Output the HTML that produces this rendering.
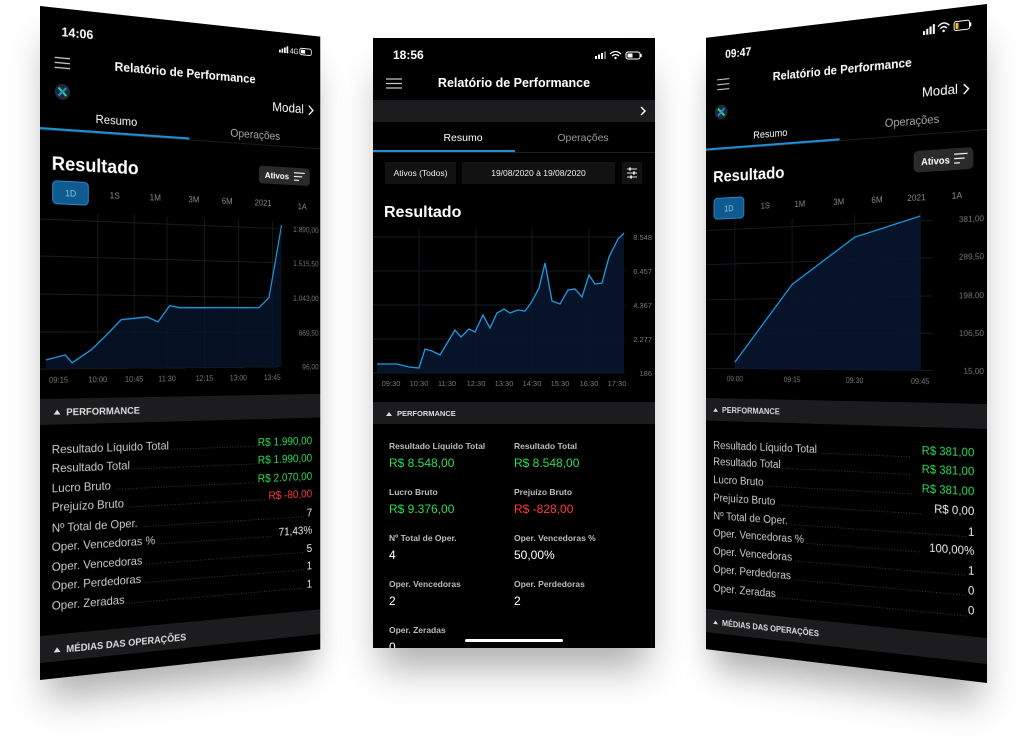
<!DOCTYPE html>
<html><head><meta charset="utf-8"><style>
html,body{margin:0;padding:0;background:#fff;width:1027px;height:754px;overflow:hidden;font-family:"Liberation Sans",sans-serif}
.wrap{position:absolute;left:0;top:0;width:1027px;height:754px}
.ph{position:absolute;background:#000;box-shadow:0 28px 36px -8px rgba(0,0,0,.32)}
svg text{font-family:"Liberation Sans",sans-serif}
</style></head><body>

<!-- LEFT PHONE -->
<div class="wrap" style="perspective:600px;perspective-origin:40px 343px">
<div class="ph" style="left:40px;top:6px;width:314px;height:674px;transform-origin:0 50%;transform:rotateY(11deg)">
<svg width="314" height="674" viewBox="0 0 314 674">
<rect width="314" height="674" fill="#000"/>
<text x="22" y="28" fill="#fff" font-size="13" font-weight="bold">14:06</text>
<g fill="#fff"><rect x="264" y="19" width="2" height="3"/><rect x="267" y="17.5" width="2" height="4.5"/><rect x="270" y="16" width="2" height="6"/><rect x="273" y="14.5" width="2" height="7.5"/></g>
<text x="277" y="22" fill="#fff" font-size="8">4G</text>
<rect x="289" y="15" width="14" height="7" rx="2" fill="none" stroke="#fff" stroke-width="1"/><rect x="290.5" y="16.5" width="5" height="4" fill="#fff"/>
<g stroke="#ccc" stroke-width="1.3"><line x1="15" y1="50" x2="31" y2="50"/><line x1="15" y1="55" x2="31" y2="55"/><line x1="15" y1="60" x2="31" y2="60"/></g>
<text x="157" y="58" fill="#fff" font-size="13" font-weight="bold" text-anchor="middle">Relatório de Performance</text>
<circle cx="23" cy="84" r="8" fill="#1f2a38"/><path d="M19 80 L27 88" stroke="#2bd38a" stroke-width="2.2"/><path d="M27 80 L19 88" stroke="#2a8ad0" stroke-width="2.2"/>
<text x="294" y="86" fill="#fff" font-size="14" text-anchor="end">Modal</text>
<path d="M300 77 L305 82 L300 87" stroke="#fff" stroke-width="1.5" fill="none"/>
<text x="80" y="113" fill="#fff" font-size="12" text-anchor="middle">Resumo</text>
<text x="236" y="117" fill="#aaa" font-size="12" text-anchor="middle">Operações</text>
<rect x="0" y="123" width="314" height="1" fill="#1e1e1e"/>
<rect x="0" y="121" width="160" height="2.2" fill="#1e90d6"/>
<text x="12" y="163" fill="#fff" font-size="19" font-weight="bold">Resultado</text>
<rect x="240" y="146" width="61" height="19" rx="4" fill="#2a2a2c"/>
<text x="247" y="159" fill="#fff" font-size="9.5" font-weight="bold">Ativos</text>
<g stroke="#fff" stroke-width="1.2"><line x1="282" y1="151.5" x2="295" y2="151.5"/><line x1="282" y1="155.5" x2="292" y2="155.5"/><line x1="282" y1="159.5" x2="288" y2="159.5"/></g>
<rect x="13" y="174" width="37" height="23" rx="4" fill="#0f5a8e" stroke="#2a8ad0"/>
<text x="31.5" y="189" fill="#8cc8ee" font-size="9" text-anchor="middle">1D</text>
<g fill="#888" font-size="9" text-anchor="middle"><text x="78" y="189">1S</text><text x="122" y="189">1M</text><text x="165" y="189">3M</text><text x="203" y="189">6M</text><text x="245" y="189">2021</text><text x="292" y="191">1A</text></g>
<g stroke="#1b1b1b" stroke-width="1"><line x1="60" y1="205" x2="60" y2="362"/><line x1="99" y1="205" x2="99" y2="362"/><line x1="135" y1="205" x2="135" y2="362"/><line x1="177" y1="205" x2="177" y2="362"/><line x1="216" y1="205" x2="216" y2="362"/><line x1="256" y1="205" x2="256" y2="362"/>
<line x1="0" y1="213" x2="262" y2="213"/><line x1="0" y1="250" x2="262" y2="250"/><line x1="0" y1="288" x2="262" y2="288"/><line x1="0" y1="326" x2="262" y2="326"/><line x1="0" y1="363" x2="262" y2="363"/></g>
<path d="M6 354 L26 349 L33 357 L53 344 L69 329 L85 313 L113 310 L125 315 L138 298 L149 300 L240 299 L252 288 L267 209 L267 363 L6 363 Z" fill="#06142a" opacity=".8"/>
<path d="M6 354 L26 349 L33 357 L53 344 L69 329 L85 313 L113 310 L125 315 L138 298 L149 300 L240 299 L252 288 L267 209" stroke="#1e9be0" stroke-width="1.4" fill="none"/>
<g fill="#777" font-size="8" text-anchor="end"><text x="312" y="216">1.890,00</text><text x="312" y="253">1.515,50</text><text x="312" y="291">1.043,00</text><text x="312" y="329">669,50</text><text x="312" y="366">96,00</text></g>
<g fill="#777" font-size="8" text-anchor="middle"><text x="19" y="377">09:15</text><text x="60" y="377">10:00</text><text x="99" y="377">10:45</text><text x="135" y="377">11:30</text><text x="177" y="377">12:15</text><text x="216" y="377">13:00</text><text x="256" y="377">13:45</text></g>
<rect x="0" y="393" width="314" height="26" fill="#1c1c1e"/>
<path d="M14 409 L17.5 404 L21 409 Z" fill="#ddd"/>
<text x="27" y="410" fill="#ddd" font-size="10" font-weight="bold">PERFORMANCE</text>
<g fill="#ccc" font-size="12">
<text x="12" y="448">Resultado Líquido Total</text><text x="12" y="467">Resultado Total</text><text x="12" y="487">Lucro Bruto</text><text x="12" y="506">Prejuízo Bruto</text><text x="12" y="527">Nº Total de Oper.</text><text x="12" y="546">Oper. Vencedoras %</text><text x="12" y="566">Oper. Vencedoras</text><text x="12" y="585">Oper. Perdedoras</text><text x="12" y="605">Oper. Zeradas</text></g>
<g stroke="#555" stroke-width="0.8" stroke-dasharray="1 2">
<line x1="140" y1="448" x2="235" y2="448"/><line x1="96" y1="467" x2="235" y2="467"/><line x1="80" y1="487" x2="235" y2="487"/><line x1="93" y1="506" x2="248" y2="506"/><line x1="110" y1="527" x2="294" y2="527"/><line x1="125" y1="546" x2="255" y2="546"/><line x1="112" y1="566" x2="294" y2="566"/><line x1="110" y1="585" x2="294" y2="585"/><line x1="90" y1="605" x2="294" y2="605"/></g>
<g font-size="12" text-anchor="end"><text x="304" y="448" fill="#2bdc55">R$ 1.990,00</text><text x="304" y="467" fill="#2bdc55">R$ 1.990,00</text><text x="304" y="487" fill="#2bdc55">R$ 2.070,00</text><text x="304" y="506" fill="#ff3b3b">R$ -80,00</text><text x="304" y="527" fill="#eee">7</text><text x="304" y="546" fill="#eee">71,43%</text><text x="304" y="566" fill="#eee">5</text><text x="304" y="585" fill="#eee">1</text><text x="304" y="605" fill="#eee">1</text></g>
<rect x="0" y="630" width="314" height="27" fill="#1c1c1e"/>
<path d="M14 648 L17.5 643 L21 648 Z" fill="#ddd"/>
<text x="27" y="649" fill="#ddd" font-size="10" font-weight="bold">MÉDIAS DAS OPERAÇÕES</text>
</svg></div></div>

<!-- CENTER PHONE -->
<div class="ph" style="left:373px;top:38px;width:282px;height:610px">
<svg width="282" height="610" viewBox="0 0 282 610">
<rect width="282" height="610" fill="#000"/>
<text x="20" y="21" fill="#fff" font-size="12" font-weight="bold">18:56</text>
<g fill="#fff"><rect x="222" y="18" width="2" height="3"/><rect x="225" y="16.5" width="2" height="4.5"/><rect x="228" y="15" width="2" height="6"/><rect x="231" y="13.5" width="2" height="7.5" fill="#777"/></g>
<path d="M237 16 Q242.5 11 248 16 M239 18 Q242.5 15 246 18" stroke="#fff" stroke-width="1.3" fill="none"/><circle cx="242.5" cy="20" r="1.2" fill="#fff"/>
<rect x="253" y="14" width="14" height="7" rx="2" fill="none" stroke="#fff"/><rect x="254.5" y="15.5" width="5" height="4" fill="#fff"/><rect x="267.5" y="16" width="1.2" height="3" fill="#fff"/>
<g stroke="#ccc" stroke-width="1.2"><line x1="13" y1="41" x2="29" y2="41"/><line x1="13" y1="45.5" x2="29" y2="45.5"/><line x1="13" y1="50" x2="29" y2="50"/></g>
<text x="141" y="49" fill="#fff" font-size="12.5" font-weight="bold" text-anchor="middle">Relatório de Performance</text>
<rect x="0" y="62" width="282" height="22" fill="#1c1c1e"/>
<path d="M268 69 L272 73 L268 77" stroke="#fff" stroke-width="1.5" fill="none"/>
<text x="90" y="103" fill="#fff" font-size="10.5" text-anchor="middle">Resumo</text>
<text x="210" y="103" fill="#999" font-size="10.5" text-anchor="middle">Operações</text>
<rect x="0" y="114" width="282" height="1" fill="#1e1e1e"/>
<rect x="0" y="112" width="142" height="2" fill="#1e90d6"/>
<rect x="12" y="124" width="71" height="22" fill="#121212"/><rect x="89" y="124" width="153" height="22" fill="#121212"/><rect x="249" y="124" width="20" height="22" fill="#121212"/>
<text x="47.5" y="138" fill="#eee" font-size="8.5" text-anchor="middle">Ativos (Todos)</text>
<text x="165.5" y="138" fill="#eee" font-size="8.5" text-anchor="middle">19/08/2020 à 19/08/2020</text>
<g stroke="#ddd" stroke-width="1"><line x1="254" y1="131" x2="264" y2="131"/><line x1="254" y1="135" x2="264" y2="135"/><line x1="254" y1="139" x2="264" y2="139"/></g>
<g fill="#ddd"><rect x="256" y="129.5" width="2" height="3"/><rect x="260" y="133.5" width="2" height="3"/><rect x="257" y="137.5" width="2" height="3"/></g>
<text x="11" y="179" fill="#fff" font-size="16" font-weight="bold">Resultado</text>
<g stroke="#151a22" stroke-width="1"><line x1="0" y1="199" x2="252" y2="199"/><line x1="0" y1="233" x2="252" y2="233"/><line x1="0" y1="267" x2="252" y2="267"/><line x1="0" y1="301" x2="252" y2="301"/><line x1="0" y1="335" x2="252" y2="335"/>
<line x1="46" y1="190" x2="46" y2="335"/><line x1="103" y1="190" x2="103" y2="335"/><line x1="159" y1="190" x2="159" y2="335"/><line x1="216" y1="190" x2="216" y2="335"/></g>
<path d="M4 326 L24 326 L36 329 L46 330 L52 311 L59 313 L67 317 L82 292 L88 299 L96 291 L102 294 L110 277 L117 290 L124 275 L131 271 L137 275 L145 272 L152 273 L158 265 L166 250 L172 225 L179 263 L187 266 L195 252 L202 251 L209 259 L216 237 L222 246 L229 245 L236 219 L245 201 L251 195 L251 335 L4 335 Z" fill="#071630" opacity=".85"/>
<path d="M4 326 L24 326 L36 329 L46 330 L52 311 L59 313 L67 317 L82 292 L88 299 L96 291 L102 294 L110 277 L117 290 L124 275 L131 271 L137 275 L145 272 L152 273 L158 265 L166 250 L172 225 L179 263 L187 266 L195 252 L202 251 L209 259 L216 237 L222 246 L229 245 L236 219 L245 201 L251 195" stroke="#1e9be0" stroke-width="1.3" fill="none"/>
<g fill="#777" font-size="7.5" text-anchor="end"><text x="279" y="202">8.548</text><text x="279" y="236">6.457</text><text x="279" y="270">4.367</text><text x="279" y="304">2.277</text><text x="279" y="338">186</text></g>
<g fill="#777" font-size="7.5" text-anchor="middle"><text x="18" y="348">09:30</text><text x="46" y="348">10:30</text><text x="74" y="348">11:30</text><text x="103" y="348">12:30</text><text x="131" y="348">13:30</text><text x="159" y="348">14:30</text><text x="187" y="348">15:30</text><text x="216" y="348">16:30</text><text x="244" y="348">17:30</text></g>
<rect x="0" y="364" width="282" height="22" fill="#1c1c1e"/>
<path d="M13 378 L16 374 L19 378 Z" fill="#ddd"/>
<text x="24" y="378" fill="#ddd" font-size="7.5" font-weight="bold">PERFORMANCE</text>
<g fill="#bbb" font-size="8.5" font-weight="bold"><text x="16" y="411">Resultado Líquido Total</text><text x="141" y="411">Resultado Total</text><text x="16" y="457">Lucro Bruto</text><text x="141" y="457">Prejuízo Bruto</text><text x="16" y="503">Nº Total de Oper.</text><text x="141" y="503">Oper. Vencedoras %</text><text x="16" y="549">Oper. Vencedoras</text><text x="141" y="549">Oper. Perdedoras</text><text x="16" y="595">Oper. Zeradas</text></g>
<g font-size="12"><text x="16" y="429" fill="#2bdc55">R$ 8.548,00</text><text x="141" y="429" fill="#2bdc55">R$ 8.548,00</text><text x="16" y="475" fill="#2bdc55">R$ 9.376,00</text><text x="141" y="475" fill="#ff3b3b">R$ -828,00</text><text x="16" y="521" fill="#fff">4</text><text x="141" y="521" fill="#fff">50,00%</text><text x="16" y="567" fill="#fff">2</text><text x="141" y="567" fill="#fff">2</text><text x="16" y="613" fill="#fff">0</text></g>
<rect x="92" y="601" width="98" height="3" rx="1.5" fill="#fff"/>
</svg></div>

<!-- RIGHT PHONE -->
<div class="wrap" style="perspective:600px;perspective-origin:987px 343.5px">
<div class="ph" style="left:668px;top:4px;width:319px;height:679px;transform-origin:100% 50%;transform:rotateY(-12deg)">
<svg width="319" height="679" viewBox="0 0 319 679">
<rect width="319" height="679" fill="#000"/>
<text x="24" y="25" fill="#fff" font-size="12.5" font-weight="bold">09:47</text>
<g fill="#fff"><rect x="252" y="20" width="2.2" height="4"/><rect x="255.5" y="18" width="2.2" height="6"/><rect x="259" y="16" width="2.2" height="8"/><rect x="262.5" y="14" width="2.2" height="10"/></g>
<path d="M268 17 Q274 11 280 17 M270.5 19.5 Q274 16 277.5 19.5" stroke="#fff" stroke-width="1.4" fill="none"/><circle cx="274" cy="22" r="1.3" fill="#fff"/>
<rect x="285" y="14" width="16" height="9" rx="2" fill="none" stroke="#fff"/><rect x="286.5" y="15.5" width="3" height="6" fill="#f5c400"/><rect x="301.5" y="16.5" width="1.3" height="4" fill="#fff"/>
<g stroke="#ccc" stroke-width="1.2"><line x1="14" y1="48" x2="29" y2="48"/><line x1="14" y1="53.5" x2="29" y2="53.5"/><line x1="14" y1="59" x2="29" y2="59"/></g>
<text x="161" y="55" fill="#fff" font-size="13" font-weight="bold" text-anchor="middle">Relatório de Performance</text>
<text x="289" y="87" fill="#fff" font-size="14" text-anchor="end">Modal</text>
<path d="M295 78 L300 83 L295 88" stroke="#fff" stroke-width="1.5" fill="none"/>
<circle cx="19" cy="84" r="8" fill="#1f2a38"/><path d="M15 80 L23 88" stroke="#2bd38a" stroke-width="2.2"/><path d="M23 80 L15 88" stroke="#2a8ad0" stroke-width="2.2"/>
<text x="79" y="116" fill="#fff" font-size="11" text-anchor="middle">Resumo</text>
<text x="240" y="115" fill="#aaa" font-size="12" text-anchor="middle">Operações</text>
<rect x="0" y="125" width="319" height="1" fill="#1e1e1e"/>
<rect x="0" y="123" width="160" height="2.2" fill="#1e90d6"/>
<text x="9" y="161" fill="#fff" font-size="18" font-weight="bold">Resultado</text>
<rect x="242" y="142" width="63" height="22" rx="5" fill="#2a2a2c"/>
<text x="250" y="157" fill="#fff" font-size="10" font-weight="bold">Ativos</text>
<g stroke="#fff" stroke-width="1.2"><line x1="285" y1="148" x2="299" y2="148"/><line x1="285" y1="152.5" x2="296" y2="152.5"/><line x1="285" y1="157" x2="291" y2="157"/></g>
<rect x="10" y="179" width="37" height="23" rx="4" fill="#0f5a8e" stroke="#2a8ad0"/>
<text x="28.5" y="194" fill="#8cc8ee" font-size="9" text-anchor="middle">1D</text>
<g fill="#888" font-size="9" text-anchor="middle"><text x="73" y="193">1S</text><text x="114" y="193">1M</text><text x="159" y="193">3M</text><text x="202" y="193">6M</text><text x="245" y="193">2021</text><text x="288" y="193">1A</text></g>
<g stroke="#151a22" stroke-width="1"><line x1="0" y1="214" x2="262" y2="214"/><line x1="0" y1="252" x2="262" y2="252"/><line x1="0" y1="291" x2="262" y2="291"/><line x1="0" y1="329" x2="262" y2="329"/><line x1="0" y1="367" x2="262" y2="367"/>
<line x1="36" y1="205" x2="36" y2="367"/><line x1="105" y1="205" x2="105" y2="367"/><line x1="177" y1="205" x2="177" y2="367"/><line x1="249" y1="205" x2="249" y2="367"/></g>
<path d="M36 360 L105 276 L177 228 L249 209 L249 367 L36 367 Z" fill="#071630" opacity=".85"/>
<path d="M36 360 L105 276 L177 228 L249 209" stroke="#1e9be0" stroke-width="1.4" fill="none"/>
<g fill="#777" font-size="8.5" text-anchor="end"><text x="316" y="217">381,00</text><text x="316" y="255">289,50</text><text x="316" y="294">198,00</text><text x="316" y="332">106,50</text><text x="316" y="370">15,00</text></g>
<g fill="#777" font-size="8" text-anchor="middle"><text x="36" y="381">09:00</text><text x="105" y="381">09:15</text><text x="177" y="381">09:30</text><text x="249" y="381">09:45</text></g>
<rect x="0" y="400" width="319" height="25" fill="#1c1c1e"/>
<path d="M9 415 L12 411 L15 415 Z" fill="#ddd"/>
<text x="20" y="416" fill="#ddd" font-size="9" font-weight="bold">PERFORMANCE</text>
<g fill="#ccc" font-size="12"><text x="9" y="456">Resultado Líquido Total</text><text x="9" y="474">Resultado Total</text><text x="9" y="494">Lucro Bruto</text><text x="9" y="514">Prejuízo Bruto</text><text x="9" y="534">Nº Total de Oper.</text><text x="9" y="553">Oper. Vencedoras %</text><text x="9" y="573">Oper. Vencedoras</text><text x="9" y="593">Oper. Perdedoras</text><text x="9" y="614">Oper. Zeradas</text></g>
<g stroke="#555" stroke-width="0.8" stroke-dasharray="1 2">
<line x1="138" y1="456" x2="240" y2="456"/><line x1="93" y1="474" x2="240" y2="474"/><line x1="77" y1="494" x2="240" y2="494"/><line x1="90" y1="514" x2="250" y2="514"/><line x1="107" y1="534" x2="298" y2="534"/><line x1="122" y1="553" x2="250" y2="553"/><line x1="109" y1="573" x2="298" y2="573"/><line x1="107" y1="593" x2="298" y2="593"/><line x1="87" y1="614" x2="298" y2="614"/></g>
<g font-size="12" text-anchor="end"><text x="306" y="453" fill="#2bdc55">R$ 381,00</text><text x="306" y="472" fill="#2bdc55">R$ 381,00</text><text x="306" y="492" fill="#2bdc55">R$ 381,00</text><text x="306" y="512" fill="#eee">R$ 0,00</text><text x="306" y="533" fill="#eee">1</text><text x="306" y="552" fill="#eee">100,00%</text><text x="306" y="572" fill="#eee">1</text><text x="306" y="592" fill="#eee">0</text><text x="306" y="612" fill="#eee">0</text></g>
<rect x="0" y="634" width="319" height="26" fill="#1c1c1e"/>
<path d="M9 650 L12 646 L15 650 Z" fill="#ddd"/>
<text x="20" y="651" fill="#ddd" font-size="9" font-weight="bold">MÉDIAS DAS OPERAÇÕES</text>
</svg></div></div>

</body></html>
